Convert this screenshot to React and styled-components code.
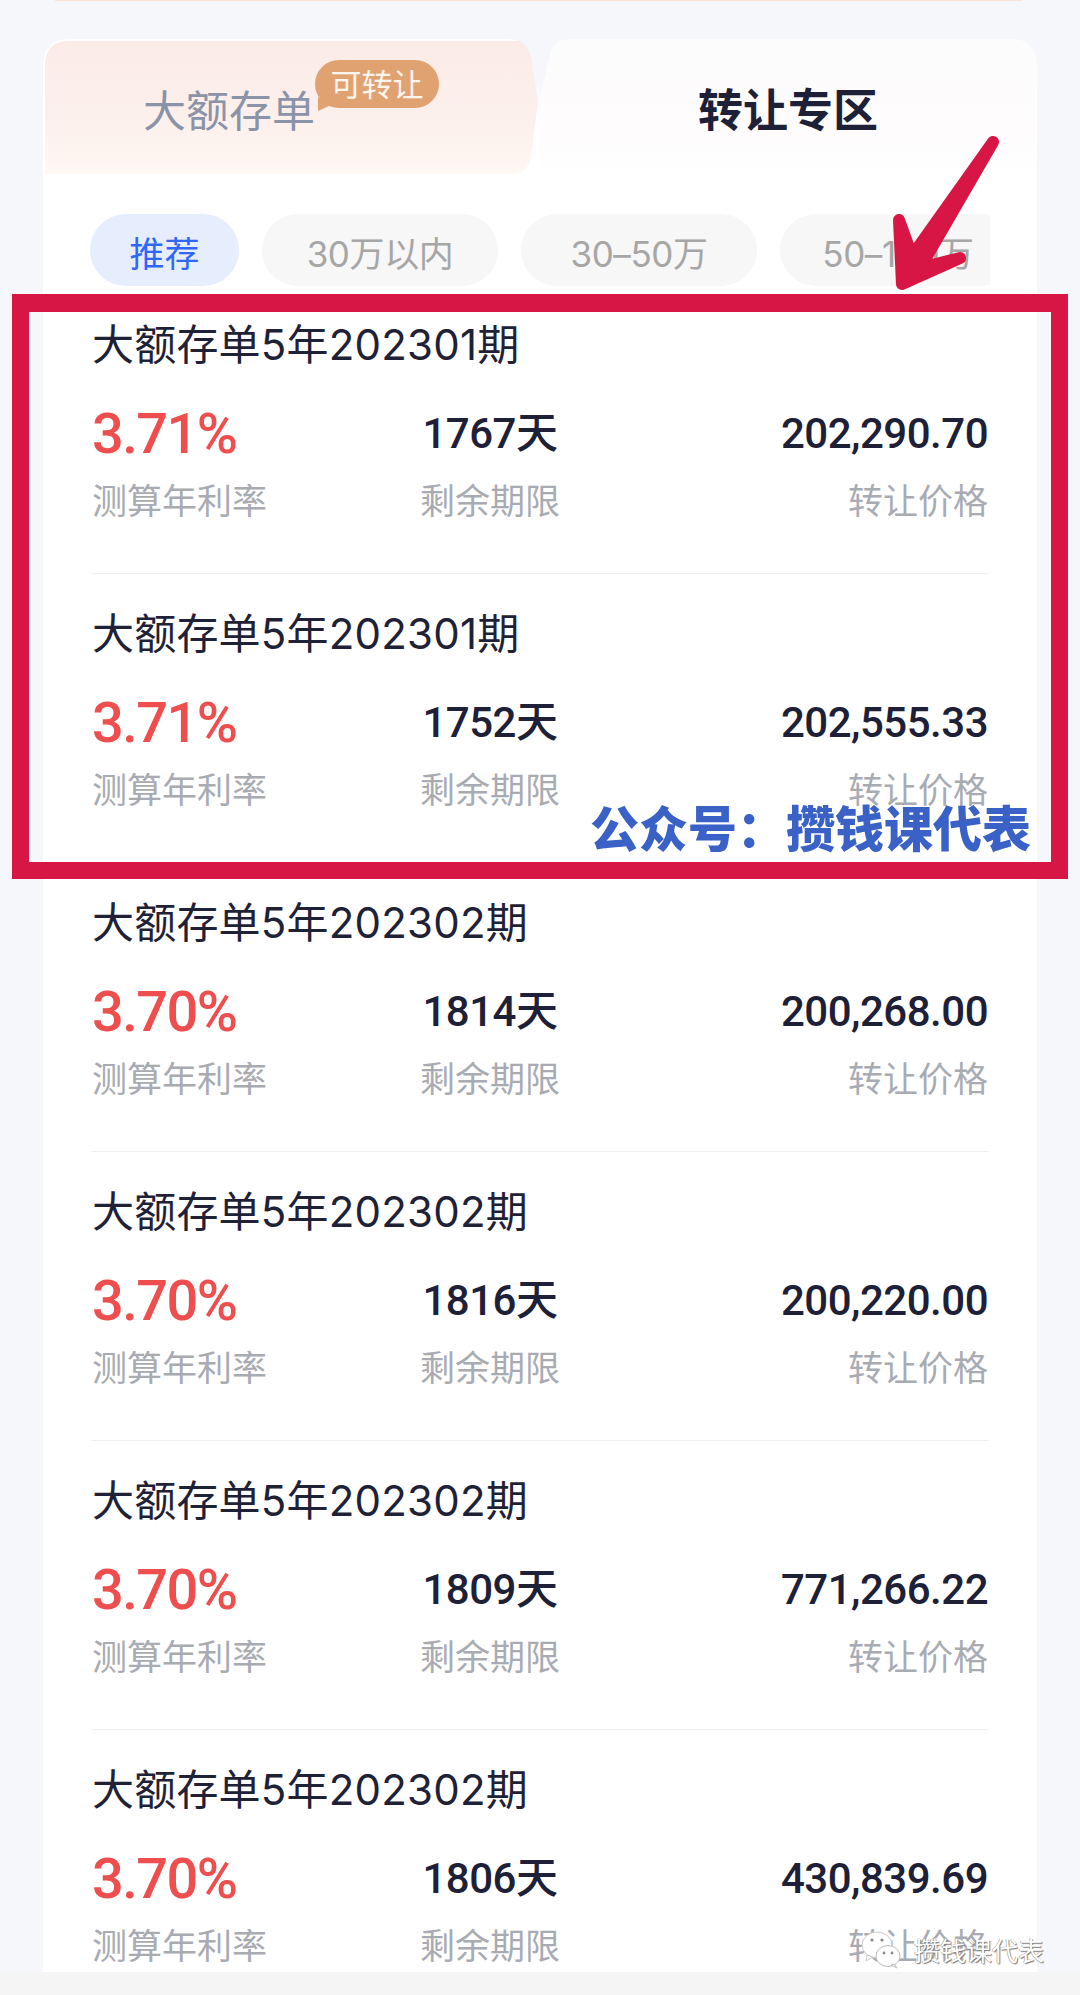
import React from "react";
import styled, { createGlobalStyle } from "styled-components";

const CJK = '"Noto Sans CJK SC", sans-serif';
const NUM = 'Roboto, "Noto Sans CJK SC", sans-serif';
const TITLE = 'Inter, "Noto Sans CJK SC", sans-serif';

const Global = createGlobalStyle`
  html, body { margin: 0; padding: 0; background: #f5f7fb; }
  body { font-family: ${CJK}; }
`;

const Page = styled.div`
  position: relative;
  width: 1080px;
  height: 1995px;
  overflow: hidden;
  background: linear-gradient(#f5f7fb 1972px, #f5f5f5 1972px);
`;

const TopStrip = styled.div`
  height: 1px;
  margin: 0 58px 0 55px;
  background: #f9e3d3;
`;

const Card = styled.main`
  width: 994px;
  height: 1933px;
  margin: 38px 0 0 43px;
  background: #fff;
  border-radius: 24px 24px 0 0;
  overflow: hidden;
`;

const TabBar = styled.div`
  display: flex;
  height: 135px;
  background: linear-gradient(#f5f7fb 0, #f5f7fb 30%, #fff 62%);
`;

const LeftTab = styled.div`
  position: relative;
  width: 496px;
  flex-shrink: 0;
  box-sizing: border-box;
  padding: 0 0 0 100px;
  display: flex;
  align-items: center;
  background: linear-gradient(#fbebe6 0%, #fcf0ec 60%, #fef5f1 90%, #fff8f5 100%);
  box-shadow: inset 0 2px 0 #fff, inset 2px 0 0 #fff;
  border-top-left-radius: 24px;
  clip-path: path("M0 135 V24 Q0 0 24 0 H465 Q484 0 488 18 L495 62 L488 118 Q485 135 468 135 Z");
`;

const TabLabel = styled.span`
  font-size: 43px;
  line-height: 60px;
  color: #8a93a8;
  margin-top: 2px;
  font-family: ${CJK};
`;

const Bubble = styled.span`
  position: absolute;
  left: 272px;
  top: 21px;
  width: 124px;
  height: 48px;
  border-radius: 24px;
  background: #e1a272;
  color: #fdf5ee;
  font-size: 31px;
  line-height: 46px;
  text-align: center;
  &::after {
    content: "";
    position: absolute;
    left: 3px;
    bottom: -3px;
    width: 12px;
    height: 14px;
    background: #e1a272;
    clip-path: polygon(0 0, 100% 60%, 0 100%);
  }
`;

const RightTab = styled.div`
  flex: 1;
  display: flex;
  align-items: center;
  justify-content: center;
  background: linear-gradient(#fdfcfc 0%, #fefcfc 70%, #fff 100%);
  clip-path: path("M0 135 V62 L11 16 Q14 0 32 0 H474 Q498 0 498 24 V135 Z");
`;

const ActiveLabel = styled.span`
  font-size: 45px;
  line-height: 60px;
  font-weight: 700;
  color: #1d2036;
  margin-top: 2px;
`;

const ChipRow = styled.div`
  display: flex;
  gap: 23px;
  width: 900px;
  margin: 40px 0 0 47px;
  overflow: hidden;
`;

const Chip = styled.div`
  flex-shrink: 0;
  width: ${(p) => p.$w}px;
  height: 72px;
  border-radius: 36px;
  display: flex;
  align-items: center;
  justify-content: center;
  padding-top: 3px;
  box-sizing: border-box;
  font-size: 35px;
  font-family: ${(p) => (p.$active ? CJK : TITLE)};
  letter-spacing: ${(p) => (p.$active ? "0" : "-0.4px")};
  color: ${(p) => (p.$active ? "#2f67f6" : "#a6a6a6")};
  background: ${(p) => (p.$active ? "#e6edfd" : "#f7f7f7")};
`;

const List = styled.div`
  margin: -1px 0 0 49px;
  width: 896px;
`;

const Row = styled.article`
  box-sizing: border-box;
  height: 289px;
  padding-top: 35px;
  border-bottom: 1px solid #efefef;
  &:last-child { border-bottom: 0; }
`;

const Title = styled.div`
  font-family: ${TITLE};
  font-size: 42px;
  line-height: 50px;
  color: #1f2236;
  letter-spacing: 0.2px;
`;

const Stats = styled.div`
  display: grid;
  grid-template-columns: 280px 236px 1fr;
  margin-top: 34px;
`;

const Stat = styled.div`
  display: flex;
  flex-direction: column;
  text-align: ${(p) => p.$align};
`;

const Rate = styled.div`
  font-family: ${NUM};
  font-weight: 500;
  font-size: 56px;
  line-height: 60px;
  color: #ee4e4e;
  letter-spacing: -1.6px;
`;

const Value = styled.div`
  font-family: ${NUM};
  font-weight: 500;
  font-size: 42px;
  line-height: 60px;
  color: #1d2036;
  letter-spacing: -0.5px;
`;

const Label = styled.div`
  font-size: 35px;
  line-height: 50px;
  margin-top: 10px;
  color: #a9abb3;
`;

const Frame = styled.div`
  position: absolute;
  left: 12px;
  top: 294px;
  width: 1056px;
  height: 585px;
  box-sizing: border-box;
  border-style: solid;
  border-color: #d81645;
  border-width: 18px 17px 17px 17px;
`;

const Arrow = styled.svg`
  position: absolute;
  left: 880px;
  top: 125px;
`;

const Stamp = styled.div`
  position: absolute;
  left: 590px;
  top: 794px;
  font-size: 49px;
  line-height: 64px;
  font-weight: 900;
  color: #3a62c6;
  white-space: nowrap;
`;

const Watermark = styled.div`
  position: absolute;
  left: 860px;
  top: 1930px;
  display: flex;
  align-items: center;
  gap: 12px;
`;

const WatermarkText = styled.span`
  font-size: 26px;
  line-height: 36px;
  color: #fff;
  text-shadow: 1px 1px 1px #777, -0.5px -0.5px 0.5px #888;
`;

const rows = [
  ["大额存单5年202301期", "3.71%", "1767天", "202,290.70"],
  ["大额存单5年202301期", "3.71%", "1752天", "202,555.33"],
  ["大额存单5年202302期", "3.70%", "1814天", "200,268.00"],
  ["大额存单5年202302期", "3.70%", "1816天", "200,220.00"],
  ["大额存单5年202302期", "3.70%", "1809天", "771,266.22"],
  ["大额存单5年202302期", "3.70%", "1806天", "430,839.69"],
];

const chips = [
  ["推荐", 149, true],
  ["30万以内", 236],
  ["30–50万", 236],
  ["50–100万", 236],
];

export default function App() {
  return (
    <Page>
      <Global />
      <TopStrip />
      <Card>
        <TabBar>
          <LeftTab>
            <TabLabel>大额存单</TabLabel>
            <Bubble>可转让</Bubble>
          </LeftTab>
          <RightTab>
            <ActiveLabel>转让专区</ActiveLabel>
          </RightTab>
        </TabBar>
        <ChipRow>
          {chips.map(([t, w, a]) => (
            <Chip key={t} $w={w} $active={a}>{t}</Chip>
          ))}
        </ChipRow>
        <List>
          {rows.map((r, i) => (
            <Row key={i}>
              <Title>{r[0]}</Title>
              <Stats>
                <Stat $align="left">
                  <Rate>{r[1]}</Rate>
                  <Label>测算年利率</Label>
                </Stat>
                <Stat $align="center">
                  <Value>{r[2]}</Value>
                  <Label>剩余期限</Label>
                </Stat>
                <Stat $align="right">
                  <Value>{r[3]}</Value>
                  <Label>转让价格</Label>
                </Stat>
              </Stats>
            </Row>
          ))}
        </List>
      </Card>
      <Frame />
      <Stamp>公众号：攒钱课代表</Stamp>
      <Arrow width="130" height="175" viewBox="880 125 130 175">
        <path
          d="M993 142 L920 268 L960 258 L902 284 L899 220 L912 256 Z"
          fill="#d81645"
          stroke="#d81645"
          strokeWidth="12"
          strokeLinejoin="round"
        />
      </Arrow>
      <Watermark>
        <svg width="42" height="40" viewBox="0 0 42 40">
          <ellipse cx="17" cy="15" rx="15" ry="13" fill="#fff" stroke="#ccc" strokeWidth="1" />
          <path d="M7 25 L6 31 L13 27 Z" fill="#fff" stroke="#ccc" strokeWidth="1" />
          <ellipse cx="28" cy="26" rx="12" ry="10.5" fill="#fff" stroke="#bbb" strokeWidth="1" />
          <path d="M34 34 L37 38 L31 35 Z" fill="#fff" stroke="#bbb" strokeWidth="1" />
          <circle cx="12" cy="10" r="1.6" fill="#888" />
          <circle cx="22" cy="10" r="1.6" fill="#888" />
          <circle cx="24" cy="23" r="1.4" fill="#888" />
          <circle cx="32" cy="23" r="1.4" fill="#888" />
        </svg>
        <WatermarkText>攒钱课代表</WatermarkText>
      </Watermark>
    </Page>
  );
}
